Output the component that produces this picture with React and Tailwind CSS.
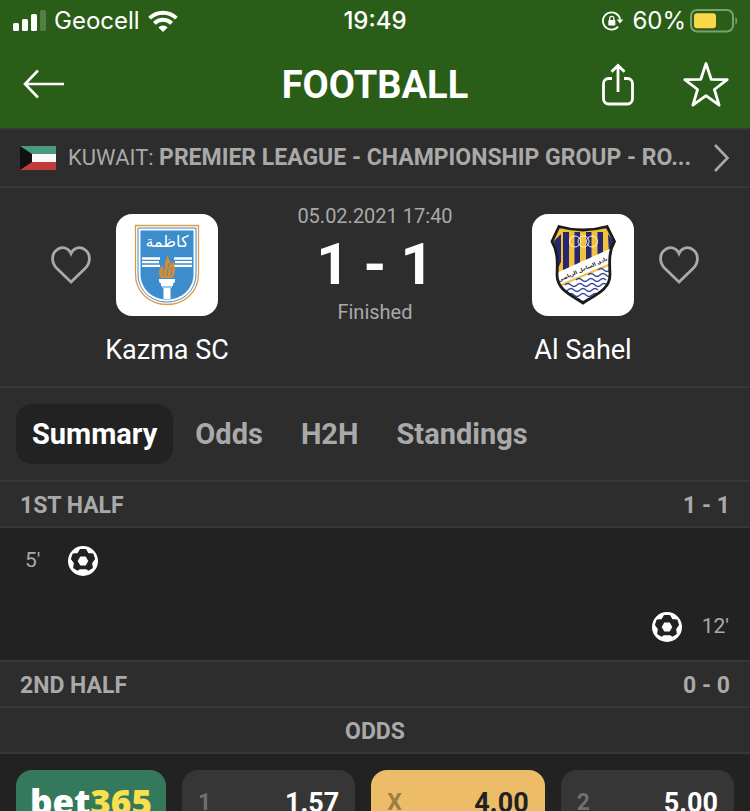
import { useState } from 'react';

const tabs = ['Summary', 'Odds', 'H2H', 'Standings'];

const odds = [
  { label: '1', value: '1.57' },
  { label: 'X', value: '4.00', active: true },
  { label: '2', value: '5.00' },
];

const SignalIcon = () => (
  <svg width="34" height="24" viewBox="0 0 34 24" aria-hidden="true">
    <rect x="1" y="14" width="6" height="8" rx="1.5" fill="#fff" />
    <rect x="10" y="10" width="6" height="12" rx="1.5" fill="#fff" />
    <rect x="19" y="5" width="6" height="17" rx="1.5" fill="#fff" />
    <rect x="28" y="1" width="6" height="21" rx="1.5" fill="#fff" fillOpacity="0.2" />
  </svg>
);

const WifiIcon = () => (
  <svg width="30" height="22" viewBox="0 0 30 22" fill="none" stroke="#fff" strokeWidth="4" aria-hidden="true">
    <path d="M1.6 8.2a19 19 0 0 1 26.8 0" />
    <path d="M6.4 13.4a12.2 12.2 0 0 1 17.2 0" />
    <path d="M15 22l-4.6-4.6a6.6 6.6 0 0 1 9.2 0z" fill="#fff" stroke="none" />
  </svg>
);

const RotationLockIcon = () => (
  <svg width="22" height="20" viewBox="0 0 22 20" aria-hidden="true">
    <path d="M16 15.6A8.6 8.6 0 1 1 18 8.5" fill="none" stroke="#fff" strokeWidth="1.8" />
    <path d="M14.8 8.4h6.4l-3.2 4z" fill="#fff" />
    <rect x="6.3" y="9" width="7" height="5.6" rx="0.8" fill="#fff" />
    <path d="M7.7 9.5V7.4a2.1 2.1 0 0 1 4.2 0v2.1" fill="none" stroke="#fff" strokeWidth="1.3" />
  </svg>
);

const BatteryIcon = () => (
  <svg width="48" height="24" viewBox="0 0 48 24" aria-hidden="true">
    <rect x="1" y="1" width="42" height="21.5" rx="6" fill="none" stroke="#fff" strokeOpacity="0.4" strokeWidth="2" />
    <rect x="4" y="4.2" width="22" height="15" rx="3.2" fill="#f9d749" />
    <path d="M45.4 8.2c2.4.9 2.4 6.2 0 7.2z" fill="#fff" fillOpacity="0.4" />
  </svg>
);

const BackIcon = () => (
  <svg width="42" height="30" viewBox="0 0 42 30" fill="none" stroke="#fff" strokeWidth="2.6" aria-hidden="true">
    <path d="M41 15H2M15 1.5L2 15l13 13.5" />
  </svg>
);

const ShareIcon = () => (
  <svg width="34" height="44" viewBox="0 0 34 44" fill="none" stroke="#fff" strokeWidth="2.8" aria-hidden="true">
    <path d="M11 16.5H7.500a5 5 0 0 0-5 5V37a5 5 0 0 0 5 5h19a5 5 0 0 0 5-5V21.500a5 5 0 0 0-5-5H23" />
    <path d="M17 30V4M10.5 9.800L17 3.500l6.500 6.300" />
  </svg>
);

const StarIcon = () => (
  <svg width="46" height="46" viewBox="0 0 46 46" fill="none" stroke="#fff" strokeWidth="2.8" strokeLinejoin="round" aria-hidden="true">
    <path d="M23 2.5l5.200 15.800 16 .3-12.800 9.900 4.700 15.600L23 34.700 9.900 44.100l4.700-15.600L1.800 18.600l16-.3z" />
  </svg>
);

const HeartIcon = () => (
  <svg width="40" height="38" viewBox="0 0 40 38" fill="none" stroke="#a9a9a9" strokeWidth="2.8" aria-hidden="true">
    <path d="M20 36L6 22.500C-.5 16 .8 7 6.200 3.600 11-.1 17.600 1.800 20 7.500 22.400 1.800 29 -.1 33.800 3.600 39.200 7 40.500 16 34 22.500z" />
  </svg>
);

const ChevronIcon = () => (
  <svg width="16" height="28" viewBox="0 0 16 28" fill="none" stroke="#a9a9a9" strokeWidth="2.6" aria-hidden="true">
    <path d="M1 1l12.500 13L1 27" />
  </svg>
);

const BallIcon = () => (
  <svg width="30" height="30" viewBox="0 0 30 30" role="img" aria-label="Goal">
    <circle cx="15" cy="15" r="15" fill="#fff" />
    <path
      d="M12.500 3.700h5l2.300 4 5 .6 1.500 4.400-3 4.300.8 4.600-3.600 2.400-2.200-1.500h-6.600l-2.200 1.500-3.600-2.400.8-4.600-3-4.300 1.500-4.400 5-.6z"
      fill="#222"
      stroke="#222"
      strokeWidth="1.5"
      strokeLinejoin="round"
    />
    <path d="M12.300 10.500h5.400l2.600 4.500-2.600 4.500h-5.400L9.700 15z" fill="#fff" />
  </svg>
);

const KuwaitFlag = () => (
  <svg width="36" height="24" viewBox="0 0 36 24" className="shrink-0" role="img" aria-label="Kuwait">
    <rect width="36" height="8" fill="#4a9a80" />
    <rect y="8" width="36" height="8" fill="#fafafa" />
    <rect y="16" width="36" height="8" fill="#c13c3a" />
    <path d="M0 0l12 8v8L0 24z" fill="#111" />
  </svg>
);

const KazmaCrest = () => (
  <svg width="102" height="102" viewBox="0 0 102 102" role="img" aria-label="Kazma SC crest">
    <path d="M19.500 11.500h63V60c0 18-14 30.500-31.500 30.500S19.500 78 19.500 60z" fill="#fff" stroke="#df9a45" strokeWidth="1.3" />
    <path d="M22 14h58v46c0 16.500-13 28-29 28S22 76.500 22 60z" fill="#fff" stroke="#3d8ccb" strokeWidth="1" />
    <path d="M24.500 16.500h53V60c0 15-12 25.500-26.500 25.500S24.500 75 24.500 60z" fill="#3d8ccb" />
    <text x="51" y="33" textAnchor="middle" fill="#fff" fontSize="16" fontFamily="DejaVu Sans, sans-serif">
      كاظمة
    </text>
    <g stroke="#fff" strokeWidth="2.3">
      <path d="M26 44.500h18M26 48.200h17M26 51.900h18M76 44.500H58M76 48.200H59M76 51.900H58" />
    </g>
    <path d="M45 64c-4-6-1-10 2-13 0 3 0 4 1 5 1-6 1-10 4-15 0 4 3 7 3 10l2-4c3 6 3 13-1 17z" fill="#d98b33" />
    <path d="M47.500 62c-1-4 0-7 2-10M51.500 62c-1-5 2-9 1-13M54.500 62c1-3 2-6 1-9" fill="none" stroke="#3d8ccb" strokeWidth="0.9" />
    <path d="M43 65h16v3l-2 1.500v2.500H45v-2.500L43 68z" fill="#fff" />
    <path d="M47.500 74h7v11h-7z" fill="#fff" />
    <path d="M46 73h10" stroke="#fff" strokeWidth="1.2" />
  </svg>
);

const SahelCrest = () => (
  <svg width="102" height="102" viewBox="0 0 102 102" role="img" aria-label="Al Sahel crest">
    <defs>
      <clipPath id="sahel-shield">
        <path d="M27 12.500q23.500 7 48 0l7.500 15c-6 10-5 22-4.500 33 0 15-14 20-27 28.500C38 80.500 25 75.500 25 60.500c.5-11 1-23-5-33z" />
      </clipPath>
    </defs>
    <g clipPath="url(#sahel-shield)">
      <rect width="102" height="102" fill="#f0c13c" />
      <path d="M31 18h6v40h-6zM42.500 18H48v38h-5.500zM54 18h5.500v30H54zM65.500 18H71v30h-5.500zM76 20l6 8-5 14z" fill="#27276f" />
      <path d="M22 27l7-7v28l-4 8z" fill="#27276f" />
      <path d="M20 61l62-28v18L20 79z" fill="#fff" />
      <path d="M20 74l62-25v53H20z" fill="#fff" />
      <path d="M22 74l59-25" stroke="#f0c13c" strokeWidth="2" />
      <g fill="none" stroke="#34459b" strokeWidth="1.3">
        <path d="M66 56q3-3 6 0t6 0 6 0" />
        <path d="M56 61q3-3 6 0t6 0 6 0 6 0" />
        <path d="M44 66q3-3 6 0t6 0 6 0 6 0 6 0" />
        <path d="M33 71q3-3 6 0t6 0 6 0 6 0 6 0 6 0 6 0" />
        <path d="M24 76q3-3 6 0t6 0 6 0 6 0 6 0 6 0 6 0" />
        <path d="M36 81q3-3 6 0t6 0 6 0 6 0 6 0" />
        <path d="M42 86q3-3 6 0t6 0 6 0" />
      </g>
    </g>
    <path
      d="M27 12.500q23.500 7 48 0l7.500 15c-6 10-5 22-4.500 33 0 15-14 20-27 28.500C38 80.500 25 75.500 25 60.500c.5-11 1-23-5-33z"
      fill="none"
      stroke="#1c1c1c"
      strokeWidth="2.8"
    />
    <g fill="none" stroke="#fff" strokeWidth="0.9">
      <circle cx="43" cy="27.5" r="5.5" />
      <circle cx="51.5" cy="27.5" r="5.5" />
      <circle cx="60" cy="27.5" r="5.5" />
    </g>
    <text
      x="51"
      y="57"
      textAnchor="middle"
      transform="rotate(-24 51 56)"
      fill="#111"
      fontSize="5"
      fontWeight="700"
      fontFamily="DejaVu Sans, sans-serif"
    >
      نادي الساحل الرياضي
    </text>
  </svg>
);

const StatusBar = () => (
  <div className="grid h-10 grid-cols-3 items-center px-3 pt-0.5 font-['Inter',sans-serif] text-2xl text-white">
    <div className="flex items-center gap-2">
      <SignalIcon />
      <span>Geocell</span>
      <WifiIcon />
    </div>
    <span className="text-center font-medium">19:49</span>
    <div className="flex items-center justify-end gap-1">
      <RotationLockIcon />
      <span className="ml-1">60%</span>
      <BatteryIcon />
    </div>
  </div>
);

const Team = ({ name, children }) => (
  <div className="flex w-36 flex-col items-center">
    <div className="size-[102px] overflow-hidden rounded-2xl bg-white">{children}</div>
    <h2 className="mt-4 text-[27px] leading-9 whitespace-nowrap text-white">{name}</h2>
  </div>
);

const FavouriteButton = ({ team }) => (
  <button type="button" aria-label={`Add ${team} to favourites`} className="mt-8">
    <HeartIcon />
  </button>
);

const SectionRow = ({ title, score }) => (
  <div className="flex h-[46px] items-center justify-between border-b-2 border-[#373737] bg-[#2d2d2d] px-5 pt-1 text-[23px] font-bold">
    <h3>{title}</h3>
    <span>{score}</span>
  </div>
);

export default function App() {
  const [activeTab, setActiveTab] = useState('Summary');

  return (
    <div className="h-screen overflow-hidden bg-[#222] font-['Roboto',sans-serif] text-[#a9a9a9]">
      <header className="bg-[#2a5e18]">
        <StatusBar />
        <div className="grid h-[88px] grid-cols-[1fr_auto_1fr] items-center px-[21px] text-white">
          <button type="button" aria-label="Back" className="justify-self-start px-0.5">
            <BackIcon />
          </button>
          <h1 className="pt-0.5 text-[38px] font-bold">FOOTBALL</h1>
          <div className="flex items-center gap-12 justify-self-end">
            <button type="button" aria-label="Share">
              <ShareIcon />
            </button>
            <button type="button" aria-label="Add to favourites">
              <StarIcon />
            </button>
          </div>
        </div>
      </header>

      <main>
        <a
          href="#league"
          className="flex h-[60px] items-center border-y-2 border-[#373737] bg-[#2d2d2d] px-5 text-[22px] whitespace-nowrap"
        >
          <KuwaitFlag />
          <span className="ml-3 flex-1">
            KUWAIT: <b className="text-[23px]">PREMIER LEAGUE - CHAMPIONSHIP GROUP - RO...</b>
          </span>
          <ChevronIcon />
        </a>

        <section className="flex h-[200px] justify-between border-b-2 border-[#373737] bg-[#2d2d2d] px-[51px] pt-[26px]">
          <div className="flex items-start gap-1">
            <FavouriteButton team="Kazma SC" />
            <Team name="Kazma SC">
              <KazmaCrest />
            </Team>
          </div>
          <div className="-mt-3 flex flex-col items-center">
            <time className="text-xl leading-7">05.02.2021 17:40</time>
            <p className="flex gap-3.5 text-[58px] leading-[68px] font-bold text-white">
              <span>1</span>
              <span>-</span>
              <span>1</span>
            </p>
            <span className="text-xl leading-7">Finished</span>
          </div>
          <div className="flex items-start gap-1">
            <Team name="Al Sahel">
              <SahelCrest />
            </Team>
            <FavouriteButton team="Al Sahel" />
          </div>
        </section>

        <nav className="flex h-[94px] items-center gap-1.5 border-b-2 border-[#373737] bg-[#2d2d2d] px-4">
          {tabs.map((tab) => (
            <button
              key={tab}
              type="button"
              onClick={() => setActiveTab(tab)}
              className={`h-[60px] rounded-2xl px-4 pt-0.5 text-[29px] font-bold ${
                activeTab === tab ? 'bg-[#222] text-white' : ''
              }`}
            >
              {tab}
            </button>
          ))}
        </nav>

        <SectionRow title="1ST HALF" score="1 - 1" />
        <ul className="border-b-2 border-[#373737] text-[21px]">
          <li className="flex h-[66px] items-center gap-7 px-[25px]">
            <span>5'</span>
            <BallIcon />
          </li>
          <li className="flex h-[66px] items-center justify-end gap-5 px-[21px]">
            <BallIcon />
            <span>12'</span>
          </li>
        </ul>
        <SectionRow title="2ND HALF" score="0 - 0" />

        <h3 className="flex h-[46px] items-center justify-center border-b-2 border-[#373737] bg-[#2d2d2d] pt-1 text-[23px] font-bold">
          ODDS
        </h3>
        <div className="flex gap-4 p-4">
          <a
            href="#bet365"
            className="flex h-16 w-[150px] items-center justify-center rounded-2xl bg-[#35795d] font-['Open_Sans',sans-serif] text-[35px] font-extrabold text-white"
          >
            bet<span className="text-[#f9e04c]">365</span>
          </a>
          {odds.map(({ label, value, active }) => (
            <button
              key={label}
              type="button"
              className={`flex h-16 flex-1 items-center justify-between rounded-2xl px-4 pt-0.5 font-bold ${
                active ? 'bg-[#edbc69] text-[#222]' : 'bg-[#363636] text-white'
              }`}
            >
              <span className={`text-[23px] ${active ? 'text-[#a07d43]' : 'text-[#6f6f6f]'}`}>{label}</span>
              <span className="text-[27px]">{value}</span>
            </button>
          ))}
        </div>
      </main>
    </div>
  );
}
